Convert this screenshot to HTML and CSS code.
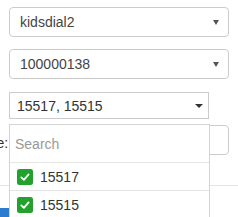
FILE: index.html
```html
<!DOCTYPE html>
<html>
<head>
<meta charset="utf-8">
<link rel="stylesheet" href="styles.css">
</head>
<body>
<div class="page">
  <div class="select"><span>kidsdial2</span><span class="caret-sm"></span></div>
  <div class="select second"><span>100000138</span><span class="caret-sm"></span></div>
  <div class="multi">
    <div class="multi-btn"><span>15517, 15515</span><span class="caret"></span></div>
    <div class="menu">
      <div class="filter"><span class="placeholder">Search</span></div>
      <div class="item">
        <svg class="check" width="16" height="16" viewBox="0 0 16 16"><rect width="16" height="16" rx="2.5" fill="#22a12d"/><path d="M4.3 8.4 L6.9 10.8 L11.6 5.4" fill="none" stroke="#fff" stroke-width="1.8" stroke-linecap="round" stroke-linejoin="round"/></svg>
        <span>15517</span>
      </div>
      <div class="item">
        <svg class="check" width="16" height="16" viewBox="0 0 16 16"><rect width="16" height="16" rx="2.5" fill="#22a12d"/><path d="M4.3 8.4 L6.9 10.8 L11.6 5.4" fill="none" stroke="#fff" stroke-width="1.8" stroke-linecap="round" stroke-linejoin="round"/></svg>
        <span>15515</span>
      </div>
    </div>
  </div>
  <div class="row">
    <label class="label">Name:</label>
    <div class="input"></div>
  </div>
  <div class="rule"></div>
  <div class="primary"></div>
</div>
</body>
</html>
```
FILE: styles.css
```css
html, body {
  margin: 0;
  padding: 0;
  overflow: hidden;
  background: #fff;
}
body {
  font-family: "Liberation Sans", Arial, sans-serif;
  font-size: 14px;
  color: #333;
}
.page {
  width: 220px;
  padding: 7px 9px 0 9px;
  display: flex;
  flex-direction: column;
}
.select {
  box-sizing: border-box;
  height: 30px;
  border: 1px solid #ccc;
  border-radius: 4px;
  display: flex;
  align-items: center;
  justify-content: space-between;
  padding: 0 9px 0 10px;
  color: #444;
}
.select.second {
  margin-top: 12px;
}
.caret-sm {
  width: 0;
  height: 0;
  border-left: 3px solid transparent;
  border-right: 3px solid transparent;
  border-top: 5px solid #555;
  margin-top: 1px;
}
.multi {
  position: relative;
  margin-top: 13px;
  width: 200px;
}
.multi-btn {
  box-sizing: border-box;
  height: 27px;
  border: 1px solid #ccc;
  display: flex;
  align-items: center;
  justify-content: space-between;
  padding: 0 5px 0 7px;
  color: #333;
}
.caret {
  width: 0;
  height: 0;
  border-left: 4px solid transparent;
  border-right: 4px solid transparent;
  border-top: 4px solid #333;
}
.menu {
  position: absolute;
  left: 0;
  top: calc(100% + 5px);
  width: 201px;
  box-sizing: border-box;
  background: #fff;
  border: 1px solid #d4d4d4;
  z-index: 2;
}
.filter {
  height: 37px;
  display: flex;
  align-items: center;
  padding-left: 5px;
  border-bottom: 1px solid #e5e5e5;
}
.placeholder {
  color: #999;
}
.item {
  height: 27px;
  display: flex;
  align-items: center;
  padding-left: 7px;
  gap: 7px;
  border-bottom: 1px solid #e5e5e5;
  color: #333;
}
.check {
  display: block;
  flex: none;
}
.row {
  display: flex;
  align-items: flex-start;
  margin-top: 6px;
  margin-left: -42px;
  gap: 8px;
}
.label {
  padding-top: 8px;
  line-height: 20px;
  color: #333;
}
.input {
  flex: 1;
  box-sizing: border-box;
  height: 30px;
  border: 1px solid #ccc;
  border-radius: 4px;
}
.rule {
  margin: 30px -9px 0 -9px;
  border-top: 1px solid #e5e5e5;
}
.primary {
  margin: 22px 0 0 -9px;
  width: 100px;
  height: 30px;
  background: #2b7bd0;
}
```
